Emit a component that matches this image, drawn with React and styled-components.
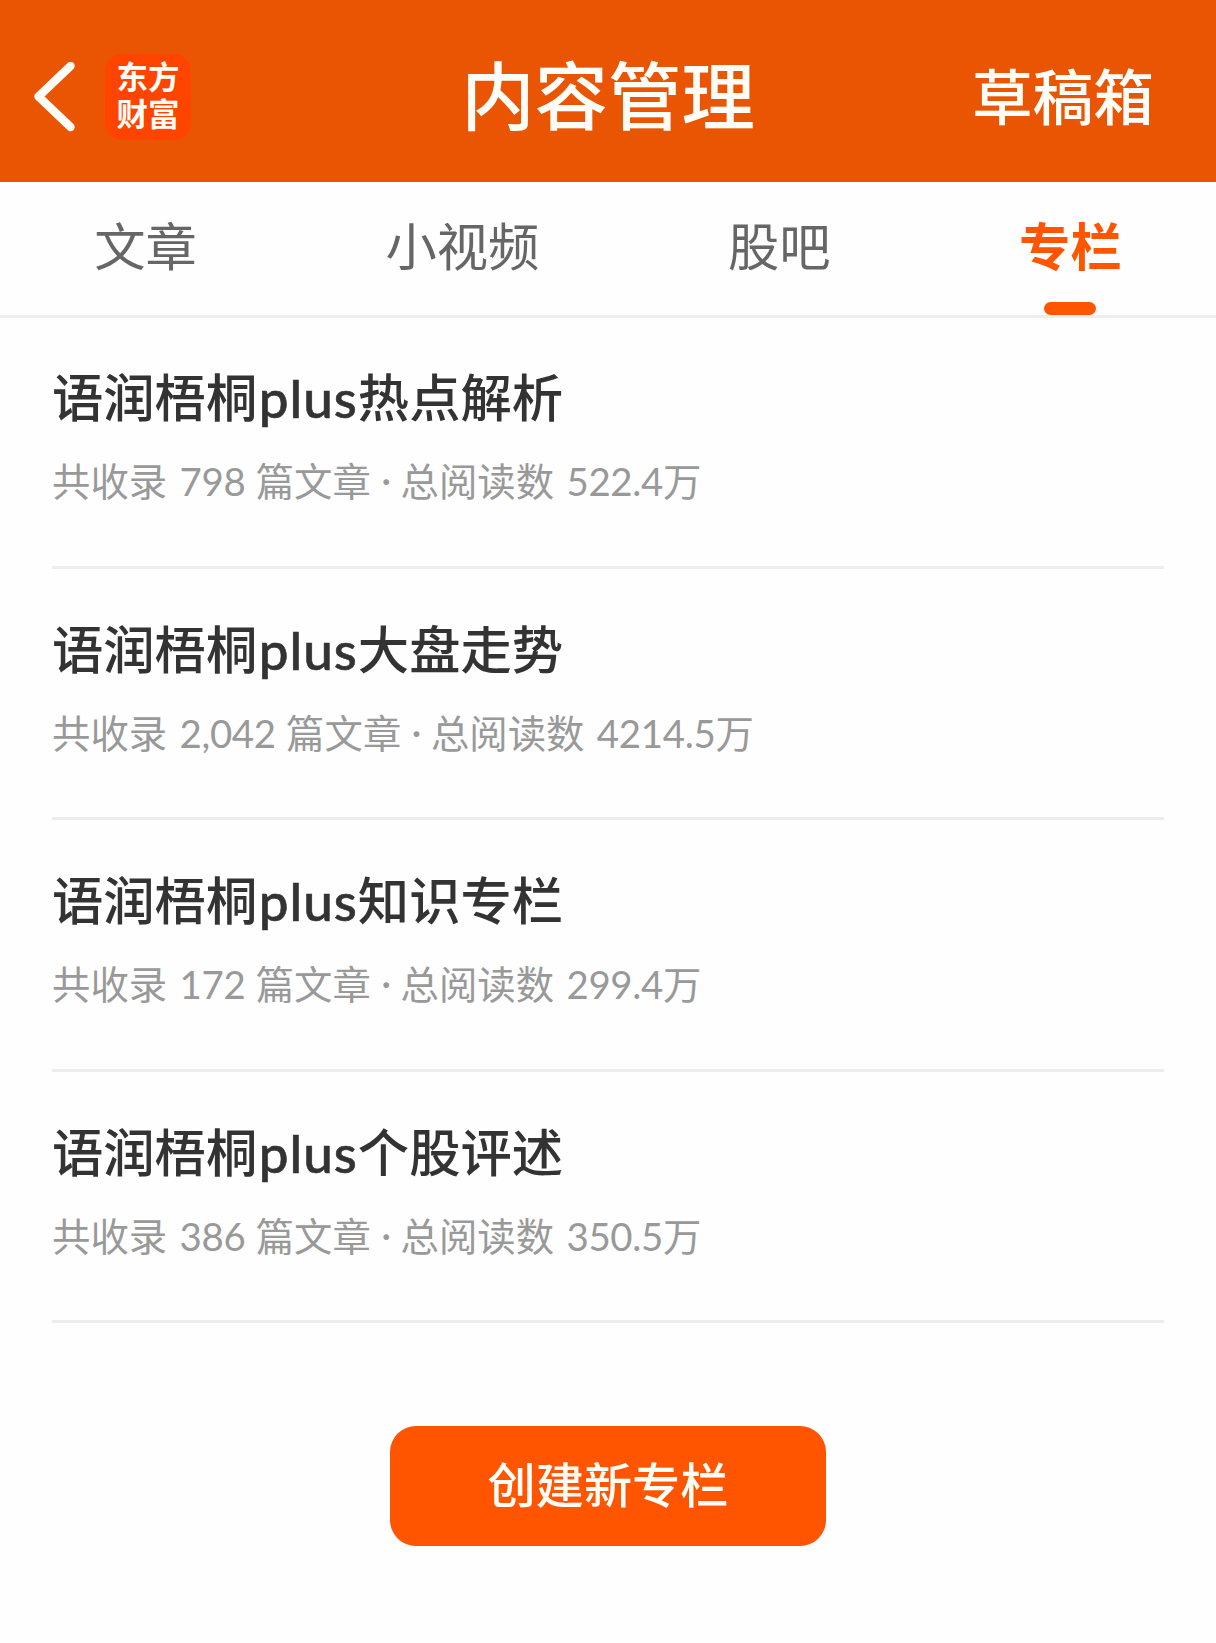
import styled, { createGlobalStyle } from "styled-components";

const GlobalStyle = createGlobalStyle`
  * {
    box-sizing: border-box;
  }
  body {
    margin: 0;
    background: #fefefe;
    font-family: "Lato", "Noto Sans CJK SC", sans-serif;
  }
`;

const Page = styled.div`
  width: 1216px;
  min-height: 1643px;
`;

const Header = styled.header`
  display: grid;
  grid-template-columns: 1fr auto 1fr;
  align-items: center;
  height: 182px;
  padding-top: 11px;
  color: #fffdf8;
  background: #ea5504;
`;

const HeaderLeft = styled.div`
  display: flex;
  align-items: center;
  gap: 30px;
  padding-left: 34px;
`;

const Logo = styled.div`
  width: 86px;
  height: 86px;
  padding-top: 5px;
  border-radius: 17px;
  background: #ff4400;
  font-size: 31.5px;
  font-weight: 700;
  line-height: 37px;
  text-align: center;
`;

const Title = styled.h1`
  margin: 0;
  padding-bottom: 1px;
  font-size: 73.4px;
  font-weight: 500;
  line-height: 90px;
`;

const Drafts = styled.button`
  justify-self: end;
  margin-right: 62px;
  padding: 1px 0 0;
  border: 0;
  background: none;
  color: inherit;
  font: inherit;
  font-size: 60.7px;
  font-weight: 500;
  line-height: 80px;
`;

const Tabs = styled.nav`
  display: flex;
  justify-content: space-around;
  height: 136px;
  border-bottom: 3px solid #ededed;
`;

const Tab = styled.div`
  display: flex;
  flex-direction: column;
  align-items: center;
  justify-content: space-between;
  padding-top: 29px;
  color: ${({ $active }) => ($active ? "#ff5500" : "#666666")};
  font-size: 51.3px;
  font-weight: ${({ $active }) => ($active ? 700 : 400)};
  line-height: 70px;

  &::after {
    content: "";
    width: 52px;
    height: 13px;
    border-radius: 7px;
    background: ${({ $active }) => ($active ? "#ff5500" : "transparent")};
  }
`;

const List = styled.main`
  margin-top: -1px;
  padding: 0 52px;
`;

const Item = styled.article`
  height: 251.6px;
  padding-top: 45px;
  border-bottom: 3px solid #ededed;
`;

const ItemTitle = styled.h2`
  height: 70px;
  margin: 0;
  color: #333333;
  font-size: 51.3px;
  font-weight: 500;
  line-height: 70px;
`;

const Latin = styled.span`
  margin-left: 1.5px;
  font-size: 53px;
  line-height: 1;
  letter-spacing: 1px;
  vertical-align: -1px;
  -webkit-text-stroke: 0.6px;
`;

const Meta = styled.p`
  margin: 22px 0 0;
  color: #999999;
  font-size: 38.4px;
  line-height: 54px;
  word-spacing: 2.5px;
`;

const Count = styled.span`
  margin-right: ${({ $tight }) => ($tight ? "-2px" : "0")};
  letter-spacing: -0.3px;
`;

const Dot = styled.span`
  margin: 0 -3px 0 -2px;
  vertical-align: 2px;
  line-height: 1;
`;

const CreateButton = styled.button`
  display: block;
  width: 436px;
  height: 120px;
  margin: 103px auto 0;
  padding: 0 0 9px;
  border: 0;
  border-radius: 26px;
  background: #ff5500;
  color: #fffdf8;
  font: inherit;
  font-size: 48.2px;
  font-weight: 500;
`;

const tabs = ["文章", "小视频", "股吧", "专栏"];

const columns = [
  { name: "热点解析", articles: "798", reads: "522.4" },
  { name: "大盘走势", articles: "2,042", reads: "4214.5" },
  { name: "知识专栏", articles: "172", reads: "299.4" },
  { name: "个股评述", articles: "386", reads: "350.5" },
];

function BackIcon() {
  return (
    <svg width="41" height="70" viewBox="0 0 41 70" fill="none">
      <path
        d="M36.5 4 L4.5 34.5 L36.5 65"
        stroke="#fffdf8"
        strokeWidth="8.5"
        strokeLinecap="round"
        strokeLinejoin="round"
      />
    </svg>
  );
}

export default function App() {
  return (
    <Page>
      <GlobalStyle />
      <Header>
        <HeaderLeft>
          <BackIcon />
          <Logo>
            东方
            <br />
            财富
          </Logo>
        </HeaderLeft>
        <Title>内容管理</Title>
        <Drafts>草稿箱</Drafts>
      </Header>
      <Tabs>
        {tabs.map((tab) => (
          <Tab key={tab} $active={tab === "专栏"}>
            {tab}
          </Tab>
        ))}
      </Tabs>
      <List>
        {columns.map(({ name, articles, reads }) => (
          <Item key={name}>
            <ItemTitle>
              语润梧桐<Latin>plus</Latin>
              {name}
            </ItemTitle>
            <Meta>
              共收录 <Count $tight>{articles}</Count> 篇文章 <Dot>·</Dot> 总阅读数{" "}
              <Count>{reads}</Count>万
            </Meta>
          </Item>
        ))}
      </List>
      <CreateButton>创建新专栏</CreateButton>
    </Page>
  );
}
